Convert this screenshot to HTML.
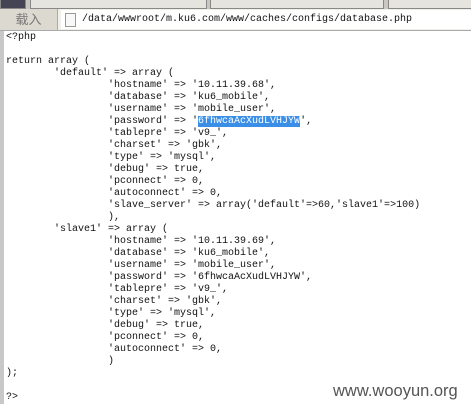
<!DOCTYPE html>
<html><head><meta charset="utf-8"><style>
body{margin:0;width:471px;height:404px;overflow:hidden;background:#fff;position:relative;font-family:"Liberation Mono",monospace}
.top{position:absolute;left:0;top:0;width:471px;height:9px;background:#c9c7c0}
.tab{position:absolute;top:0;height:8px;background:#e6e4de;border:1px solid #888;border-top:none}
.addr{position:absolute;left:0;top:9px;width:471px;height:21px;background:#f1efe9;border-bottom:1px solid #aaa}
.btn{position:absolute;left:0;top:0;width:57px;height:21px;background:#dcd9d0;border-right:1px solid #aaa;color:#777;font:13px "Liberation Sans","Noto Sans CJK SC",sans-serif;text-align:center;line-height:21px}
.url{position:absolute;left:61px;top:1px;right:0;height:19px;background:#fff;font-size:10px;line-height:19px;color:#111}
.icon{position:absolute;left:4px;top:3px;width:9px;height:12px;border:1px solid #999;background:#f8f8f8}
.lb{position:absolute;left:0;top:31px;width:4px;height:373px;background:#c8c8c8}
pre{position:absolute;left:6px;top:32px;margin:0;font:10px/12px "Liberation Mono",monospace;color:#111}
.hl{background:#3a8ee6;color:#fff}
.wm{position:absolute;left:333px;top:382px;font:16.5px "Liberation Sans",sans-serif;color:#555}
</style></head><body>
<div class="top"><div class="tab" style="left:0;width:24px;background:#445"></div><div class="tab" style="left:30px;width:175px"></div><div class="tab" style="left:210px;width:172px"></div><div class="tab" style="left:388px;width:83px"></div></div>
<div class="addr"><div class="btn">载入</div><div class="url"><div class="icon"></div><span style="position:absolute;left:21px">/data/wwwroot/m.ku6.com/www/caches/configs/database.php</span></div></div>
<div class="lb"></div>
<pre>&lt;?php

return array (
        'default' =&gt; array (
                 'hostname' =&gt; '10.11.39.68',
                 'database' =&gt; 'ku6_mobile',
                 'username' =&gt; 'mobile_user',
                 'password' =&gt; '<span class="hl">6fhwcaAcXudLVHJYW</span>',
                 'tablepre' =&gt; 'v9_',
                 'charset' =&gt; 'gbk',
                 'type' =&gt; 'mysql',
                 'debug' =&gt; true,
                 'pconnect' =&gt; 0,
                 'autoconnect' =&gt; 0,
                 'slave_server' =&gt; array('default'=&gt;60,'slave1'=&gt;100)
                 ),
        'slave1' =&gt; array (
                 'hostname' =&gt; '10.11.39.69',
                 'database' =&gt; 'ku6_mobile',
                 'username' =&gt; 'mobile_user',
                 'password' =&gt; '6fhwcaAcXudLVHJYW',
                 'tablepre' =&gt; 'v9_',
                 'charset' =&gt; 'gbk',
                 'type' =&gt; 'mysql',
                 'debug' =&gt; true,
                 'pconnect' =&gt; 0,
                 'autoconnect' =&gt; 0,
                 )
);

?&gt;</pre>
<div class="wm">www.wooyun.org</div>
</body></html>
